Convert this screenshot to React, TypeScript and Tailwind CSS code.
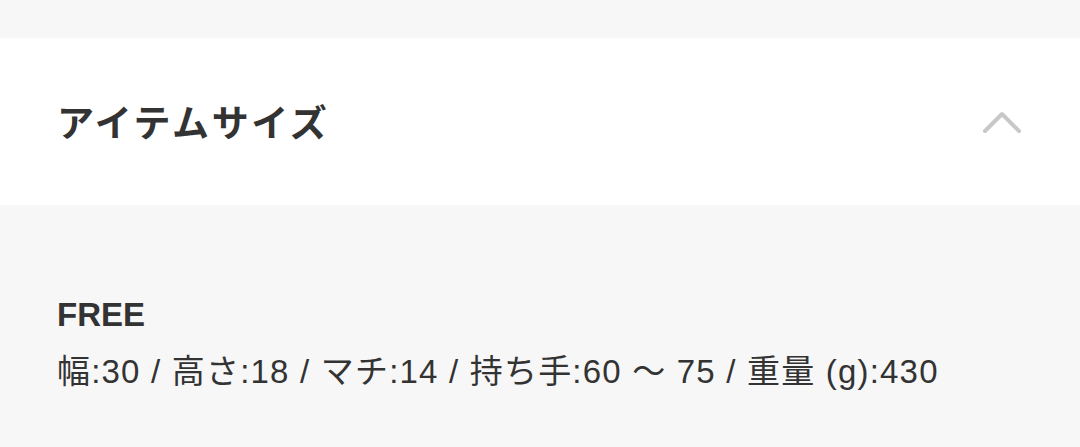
export default function App() {
  const font = { fontFamily: '"Liberation Sans", "Noto Sans CJK JP", sans-serif' };
  return (
    <div className="w-[1080px] h-[447px] bg-[#f7f7f7] text-[#333333]" style={font}>
      <div className="h-[38px]" />
      <div className="h-[167px] bg-white flex items-center justify-between pl-[57px] pr-[58px]">
        <h2 className="text-[37px] font-bold leading-none tracking-[2.6px]" style={{ fontFamily: '"Noto Sans CJK JP", sans-serif' }}>アイテムサイズ</h2>
        <svg width="40" height="24" viewBox="0 0 40 24" fill="none">
          <path d="M3 21 L20 4 L37 21" stroke="#c8c8c8" strokeWidth="4" strokeLinecap="round" strokeLinejoin="round" />
        </svg>
      </div>
      <div className="pl-[57px] pt-[88px]">
        <p className="text-[33px] font-bold leading-[44px]">FREE</p>
        <p className="text-[33px] leading-[44px] mt-[13px] tracking-[1.2px]">幅:30 / 高さ:18 / マチ:14 / 持ち手:60 ～ 75 / 重量 (g):430</p>
      </div>
    </div>
  );
}
